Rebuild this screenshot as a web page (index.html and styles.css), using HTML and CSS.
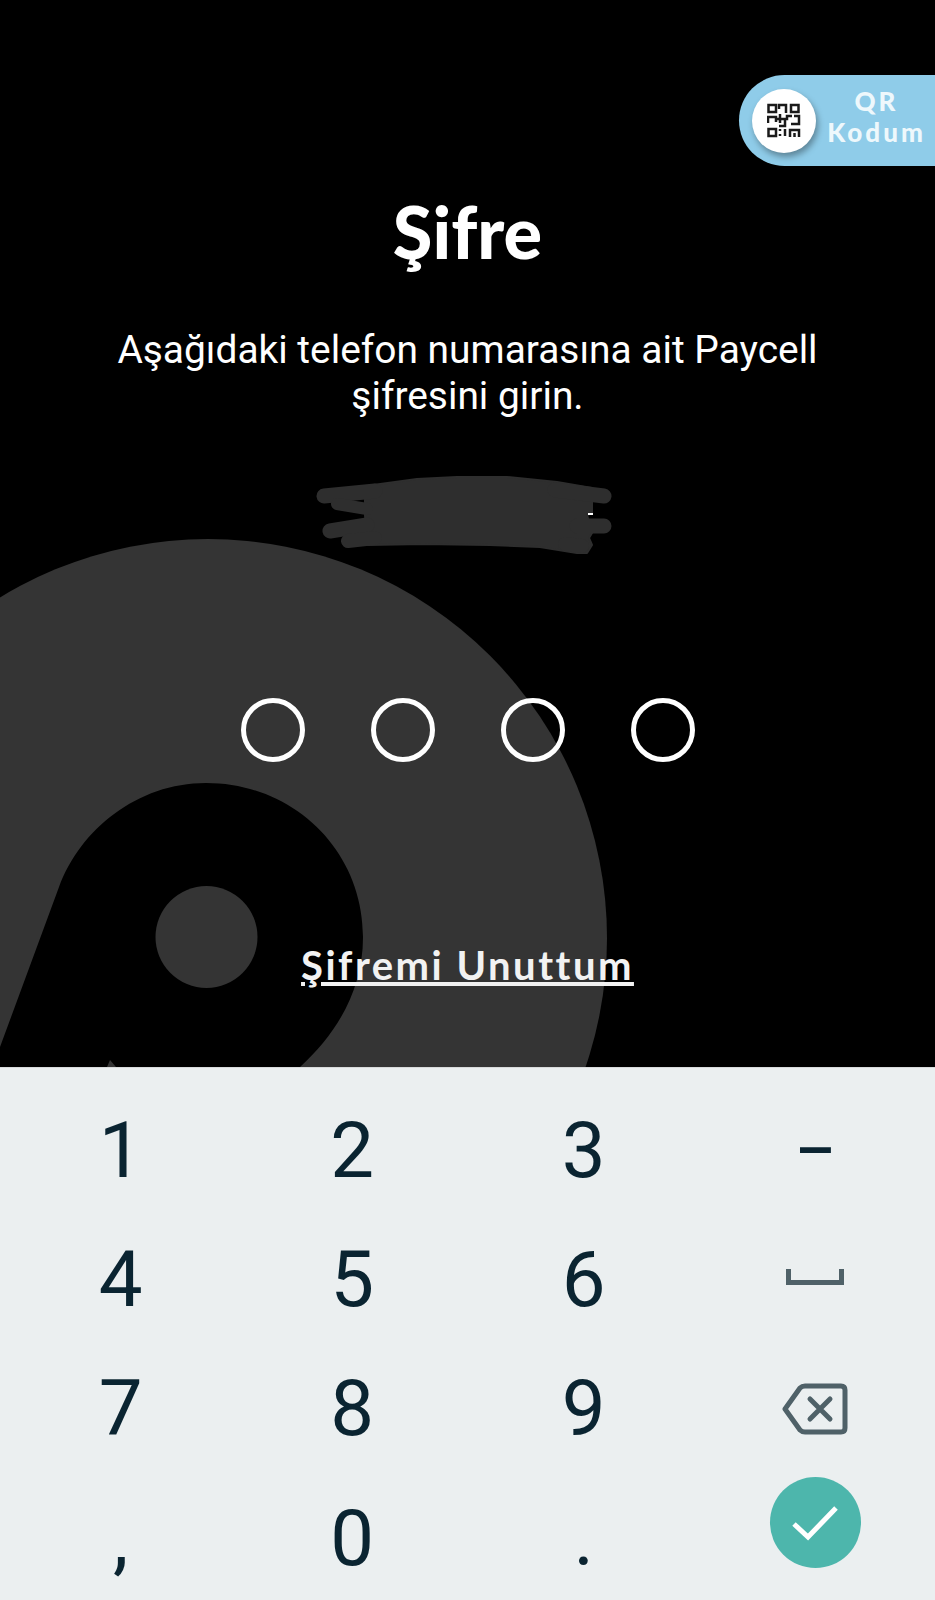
FILE: index.html
```html
<!DOCTYPE html>
<html lang="tr">
<head>
	<meta charset="UTF-8">
	<title>Şifre</title>
	<link rel="stylesheet" href="styles.css">
</head>
<body>
	<div class="screen">
		<svg class="logo" width="935" height="1067" viewBox="0 0 935 1067">
			<circle cx="208" cy="938" r="399" fill="#343434"/>
			<path d="M0 1047 L59 887 C80 830 137 783 206 783 C293 783 363 850 363 937 C363 990 337 1033 300 1067 L0 1067 Z" fill="#000"/>
			<circle cx="206.500" cy="937" r="51" fill="#343434"/>
			<path d="M107 1067 L110 1060 L116 1067 Z" fill="#343434"/>
		</svg>

		<a class="qr-tab" href="#">
			<span class="qr-icon">
				<svg width="34" height="35" viewBox="0 0 34 35" fill="none" stroke="#1a1a1a" stroke-width="2.500">
					<rect x="1.500" y="2" width="7.500" height="7"/>
					<rect x="24" y="2" width="7.500" height="7"/>
					<rect x="1.500" y="26" width="7.500" height="7"/>
					<path d="M12 6V2H19V10"/>
					<path d="M1 20V14H9V19"/>
					<path d="M13 11V16H9"/>
					<path d="M13 20V16H20V13H25"/>
					<path d="M27 13H32V21H24"/>
					<path d="M18 16V23H12"/>
					<path d="M13 26V28M13 31V33"/>
					<path d="M18 33V26"/>
					<path d="M23 34V27H32V34M27.500 30V34"/>
				</svg>
			</span>
			<span class="qr-label">QR<br>Kodum</span>
		</a>

		<h1 class="title">Şifre</h1>
		<p class="intro">Aşağıdaki telefon numarasına ait Paycell<br>şifresini girin.</p>

		<svg class="phone" width="300" height="80" viewBox="0 0 300 80">
			<g fill="#2e2e2e" stroke="#2e2e2e" stroke-linecap="round" stroke-linejoin="round">
				<path stroke-width="2" d="M58 5 L102 -1 L142 -3 L192 -3 L242 2 L277 8 L277 33 L272 35 L277 53 L274 58 L277 65 L272 73 L262 73 L225 67 L175 65 L108 64 L52 65 L50 35 L50 8 Z"/>
				<path stroke-width="15" d="M9 16 L60 11 M240 10 L289 16"/>
				<path stroke-width="15" d="M15 51 L52 45 M262 46 L289 46"/>
				<path stroke-width="14" d="M250 64 L267 66 M33 61 L60 58"/>
				<path stroke-width="12" d="M22 24 L52 29"/>
			</g>
			<rect x="273" y="33" width="5" height="2" fill="#fff"/>
		</svg>

		<div class="pins">
			<span class="pin"></span>
			<span class="pin"></span>
			<span class="pin"></span>
			<span class="pin"></span>
		</div>

		<a class="forgot" href="#">Şifremi Unuttum</a>
	</div>

	<div class="keypad">
		<button class="key">1</button>
		<button class="key">2</button>
		<button class="key">3</button>
		<button class="key key-minus">–</button>

		<button class="key">4</button>
		<button class="key">5</button>
		<button class="key">6</button>
		<button class="key">
			<svg class="space-icon" width="58" height="16" viewBox="0 0 58 16" fill="none" stroke="#4f6168" stroke-width="5">
				<path d="M2.500 0V13.500H55.500V0"/>
			</svg>
		</button>

		<button class="key">7</button>
		<button class="key">8</button>
		<button class="key">9</button>
		<button class="key">
			<svg width="66" height="52" viewBox="0 0 66 52" fill="none" stroke="#4f6168" stroke-width="5" stroke-linecap="round" stroke-linejoin="round">
				<path d="M3 26 L18 5 Q20 3 23 3 H59 Q63 3 63 7 V45 Q63 49 59 49 H23 Q20 49 18 47 Z"/>
				<path d="M28 16 L48 36 M48 16 L28 36"/>
			</svg>
		</button>

		<button class="key">,</button>
		<button class="key">0</button>
		<button class="key">.</button>
		<button class="key">
			<span class="done">
				<svg width="46" height="36" viewBox="0 0 46 36" fill="none" stroke="#fff" stroke-width="5">
					<path d="M2 19 L16 32 L44 3"/>
				</svg>
			</span>
		</button>
	</div>
</body>
</html>
```

FILE: styles.css
```css
*{
	margin: 0;
	padding: 0;
	border: 0;
	box-sizing: border-box;
}
html, body{
	height: 1600px;
	overflow: hidden;
}
body{
	background: #000;
	font-family: Roboto, "Liberation Sans", sans-serif;
	color: #fff;
}
a{
	color: inherit;
}

.screen{
	position: relative;
	height: 1067px;
	overflow: hidden;
	display: flex;
	flex-direction: column;
	align-items: center;
}
.logo{
	position: absolute;
	left: 0;
	top: 0;
}

.qr-tab{
	position: absolute;
	top: 75px;
	right: 0;
	width: 196px;
	height: 91px;
	display: flex;
	align-items: center;
	background: #8fcce9;
	border-radius: 46px 0 0 46px;
	text-decoration: none;
}
.qr-icon{
	width: 64px;
	height: 64px;
	margin-left: 13px;
	display: flex;
	align-items: center;
	justify-content: center;
	background: #fff;
	border-radius: 50%;
	box-shadow: 2px 4px 6px rgba(0, 0, 0, .35);
}
.qr-label{
	flex: 1;
	margin-top: -7px;
	padding-left: 2px;
	text-align: center;
	font: 900 26px/31px Lato, sans-serif;
	letter-spacing: 3px;
	color: #eef8fc;
}

.title{
	position: relative;
	margin-top: 195px;
	font: 900 72px/72px Lato, sans-serif;
}
.intro{
	position: relative;
	margin-top: 60px;
	font-size: 38.900px;
	line-height: 46px;
	text-align: center;
}
.phone{
	position: relative;
	margin-top: 61px;
	margin-left: -5px;
	overflow: visible;
}
.pins{
	position: relative;
	margin-top: 138px;
	display: flex;
	gap: 66px;
}
.pin{
	width: 64px;
	height: 64px;
	border: 5px solid #fff;
	border-radius: 50%;
}
.forgot{
	position: relative;
	margin-top: 180px;
	font: bold 40px/46px Lato, sans-serif;
	letter-spacing: 2.500px;
	color: #f2f2f2;
}

.keypad{
	height: 533px;
	padding: 18px 4px 0 5px;
	display: grid;
	grid-template-columns: repeat(4, 1fr);
	grid-auto-rows: 129.300px;
	background: #ebeff0;
	border-top: 1px solid #d8dadb;
}
.key{
	display: flex;
	align-items: center;
	justify-content: center;
	background: none;
	font-family: Roboto, sans-serif;
	font-size: 78px;
	line-height: 1;
	color: #0a2431;
}
.key-minus{
	font-size: 62px;
	font-weight: 500;
}
.space-icon{
	margin-top: -6px;
}
.done{
	width: 91px;
	height: 91px;
	margin-top: -32px;
	display: flex;
	align-items: center;
	justify-content: center;
	background: #4db6ac;
	border-radius: 50%;
}
```
